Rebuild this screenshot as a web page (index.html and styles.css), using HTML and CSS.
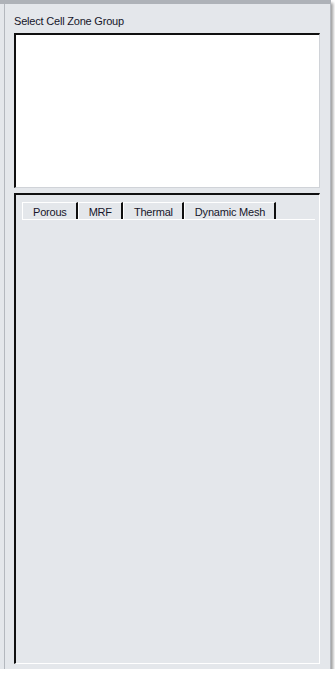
FILE: index.html
```html
<!DOCTYPE html>
<html lang="en">
<head>
    <meta charset="UTF-8">
    <title>Cell Zone Conditions</title>
    <link rel="stylesheet" href="styles.css">
</head>
<body>
    <div class="frame">
        <div class="panel">
            <div class="label">Select Cell Zone Group</div>

            <div class="list-box"></div>

            <div class="tab-panel">
                <div class="tabs">
                    <div class="tab active">Porous</div>
                    <div class="tab">MRF</div>
                    <div class="tab">Thermal</div>
                    <div class="tab">Dynamic Mesh</div>
                </div>
                <div class="tab-body"></div>
            </div>
        </div>
    </div>
</body>
</html>
```

FILE: styles.css
```css
:root {
    --panel-bg: #e4e7eb;
    --frame-line: #b4b8be;
    --dark-edge: #101010;
    --light-edge: #ffffff;
}

* {
    margin: 0;
    padding: 0;
    box-sizing: border-box;
}

body {
    background: #ffffff;
    font-family: 'Liberation Sans', Arial, sans-serif;
    font-size: 11px;
    letter-spacing: -0.2px;
    color: #16162a;
}

.frame {
    width: 331px;
    height: 669px;
    background: var(--panel-bg);
    border-top: 4px solid #aeb2b8;
    box-shadow: 2px 3px 3px rgba(0, 0, 0, 0.4);
}

.panel {
    height: 100%;
    margin-left: 4px;
    border-left: 1px solid var(--frame-line);
    border-right: 1px solid var(--frame-line);
    padding: 11px 9px 0 9px;
    display: flex;
    flex-direction: column;
}

.label {
    height: 18px;
    line-height: 12px;
}

.list-box {
    height: 155px;
    background: #ffffff;
    border-top: 2px solid var(--dark-edge);
    border-left: 2px solid var(--dark-edge);
    border-right: 1px solid #d0d3d8;
    border-bottom: 1px solid #d0d3d8;
    margin-right: 1px;
}

.tab-panel {
    margin-top: 5px;
    height: 471px;
    margin-right: 1px;
    border-top: 2px solid var(--dark-edge);
    border-left: 2px solid var(--dark-edge);
    border-right: 1px solid var(--light-edge);
    border-bottom: 1px solid var(--light-edge);
    padding: 7px 4px 0 6px;
}

.tabs {
    display: flex;
    height: 18px;
    border-bottom: 1px solid var(--light-edge);
}

.tab {
    padding: 2px 9px 0 10px;
    height: 17px;
    line-height: 15px;
    border-top: 1px solid var(--light-edge);
    border-left: 1px solid var(--light-edge);
    border-right: 2px solid var(--dark-edge);
}
```
